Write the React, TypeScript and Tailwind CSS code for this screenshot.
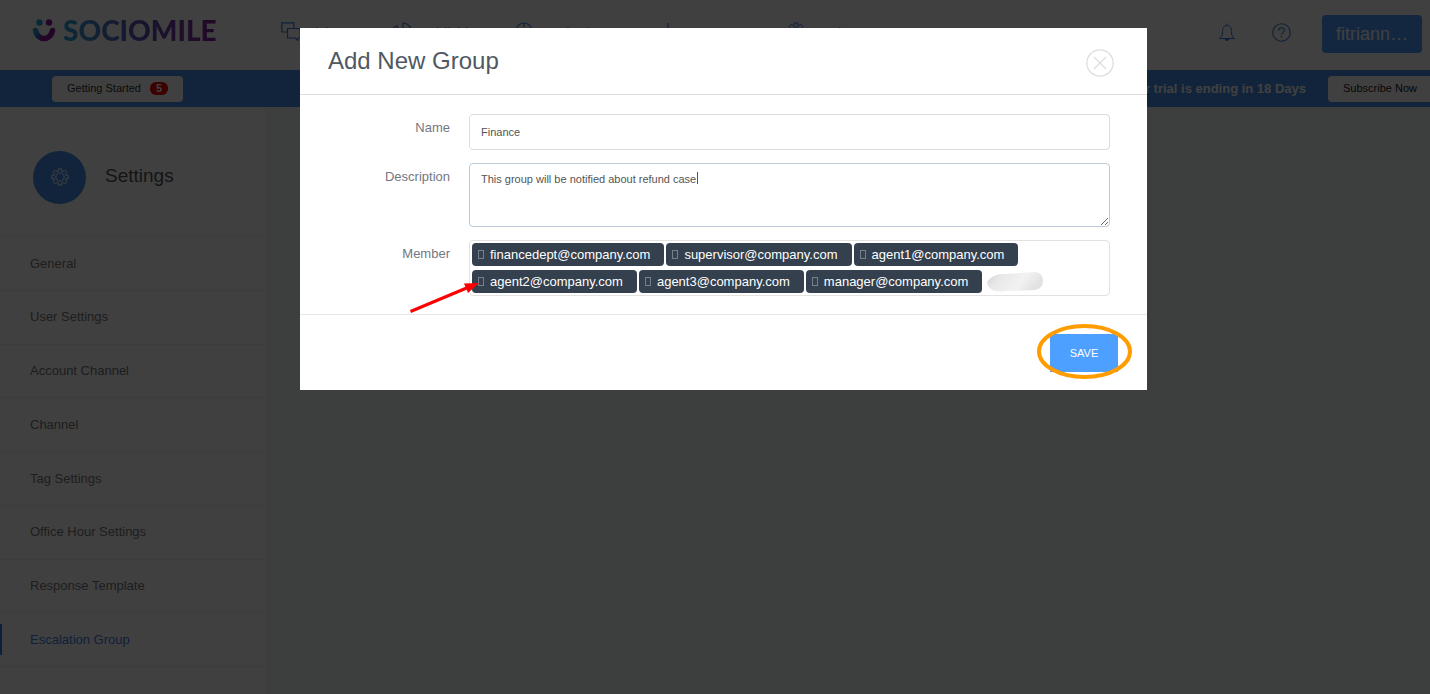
import { useState } from 'react';

const sidebarItems = [
  'General',
  'User Settings',
  'Account Channel',
  'Channel',
  'Tag Settings',
  'Office Hour Settings',
  'Response Template',
  'Escalation Group',
];

const members = [
  'financedept@company.com',
  'supervisor@company.com',
  'agent1@company.com',
  'agent2@company.com',
  'agent3@company.com',
  'manager@company.com',
];

function Logo() {
  return (
    <a href="#" className="flex items-center gap-[7px]">
      <svg width="24" height="24" viewBox="0 0 24 24" aria-hidden="true">
        <defs>
          <linearGradient id="smile" x1="0" y1="0" x2="1" y2="0.4">
            <stop offset="0" stopColor="#1fa5dc" />
            <stop offset="0.5" stopColor="#3a4fb0" />
            <stop offset="0.6" stopColor="#8a1a9c" />
            <stop offset="1" stopColor="#8a1a9c" />
          </linearGradient>
        </defs>
        <circle cx="7.5" cy="4.5" r="3.2" fill="#1fa5dc" />
        <circle cx="17" cy="4.5" r="3.2" fill="#8a1a9c" />
        <path d="M3.500 12.500C4 17 8 20.500 12 20.500S20 17 20.500 12.500" fill="none" stroke="url(#smile)" strokeWidth="5.600" strokeLinecap="round" />
      </svg>
      <span className="bg-linear-to-r from-[#1fa5dc] via-[#5a4fb8] to-[#8a1a9c] bg-clip-text font-[Lato,sans-serif] text-[28px] leading-8 font-black text-transparent">
        SOCIOMILE
      </span>
    </a>
  );
}

function GearIcon({ size }: { size: number }) {
  return (
    <svg width={size} height={size} viewBox="0 0 20 20" fill="none" stroke="currentColor" strokeWidth="1.1" strokeLinejoin="round" aria-hidden="true">
      <path d="M8.300 3.300 8 1h4l-.3 2.300 1.800.8 1.500-1.900 2.800 2.800-1.900 1.500.8 1.800L19 8v4l-2.300-.3-.8 1.800 1.900 1.500-2.800 2.800-1.500-1.900-1.800.8L12 19H8l.3-2.300-1.800-.8L5 17.800 2.200 15l1.900-1.500-.8-1.800L1 12V8l2.300.3.8-1.800L2.200 5 5 2.200l1.500 1.900z" />
      <circle cx="10" cy="10" r="4.600" />
    </svg>
  );
}

function Header() {
  return (
    <header className="flex h-[70px] items-start bg-white px-2">
      <div className="w-[273px] pt-[14px] pl-6">
        <Logo />
      </div>
      <nav className="flex pt-[22px] text-sm leading-[22px] text-[#3f7fe0]">
        <a href="#" className="flex w-28 gap-[6px]">
          <svg width="20" height="19" viewBox="0 0 20 19" fill="none" stroke="currentColor" strokeWidth="1.200" aria-hidden="true">
            <path d="M6 10H.8V.8h12V6M6.500 6.500h12.700v9.500h-2.400v2.400L14 16H6.500z" />
          </svg>
          Ticket
        </a>
        <a href="#" className="flex w-[122px] gap-2">
          <svg width="18" height="19" viewBox="0 0 18 19" fill="none" stroke="currentColor" strokeWidth="1.200" aria-hidden="true">
            <path d="M10 1v8h8A8 8 0 0 0 10 1zM4 4a8 8 0 1 0 10 8H6z" />
          </svg>
          Publishing
        </a>
        <a href="#" className="flex w-[143px] gap-[6px]">
          <svg width="18" height="18" viewBox="0 0 18 18" fill="none" stroke="currentColor" strokeWidth="1.200" aria-hidden="true">
            <circle cx="9" cy="9" r="8" />
            <path d="M9 1v4M9 9l3-3" />
          </svg>
          Monitoring
        </a>
        <a href="#" className="flex w-[129px] gap-3">
          <svg width="18" height="18" viewBox="0 0 18 18" fill="none" stroke="currentColor" strokeWidth="1.200" aria-hidden="true">
            <path d="M1 17V9M6 17V6M10 17V1M15 17v-6" />
          </svg>
          Report
        </a>
        <a href="#" className="flex gap-2">
          <GearIcon size={18} />
          Setting
        </a>
      </nav>
      <div className="ml-auto flex items-start pt-[15px] text-[#3f7fe0]">
        <button type="button" aria-label="Notifications" className="mt-2 mr-9">
          <svg width="18" height="19" viewBox="0 0 18 19" fill="none" stroke="currentColor" aria-hidden="true">
            <path d="M1 15.500h16M2 15.200c2-1.400 2.500-3 2.500-6.700C4.500 5 6 2.500 9 2.500s4.500 2.500 4.500 6c0 3.700.5 5.300 2.500 6.700M9 .5v2" />
            <path d="M7 16h4c-.5 2-3.500 2-4 0z" fill="currentColor" />
          </svg>
        </button>
        <button type="button" aria-label="Help" className="mt-2 mr-[31px]">
          <svg width="19" height="19" viewBox="0 0 19 19" fill="none" stroke="currentColor" strokeWidth="1.100" aria-hidden="true">
            <circle cx="9.500" cy="9.500" r="8.800" />
            <path d="M6.800 7.500c0-3.700 5.600-3.500 5.600-.2 0 1.900-2.900 2.200-2.900 4.400M9.500 13v1.500" />
          </svg>
        </button>
        <button type="button" className="h-[38px] rounded bg-[#4da0ff] px-[14px] text-lg text-white">
          fitriann…
        </button>
      </div>
    </header>
  );
}

function TrialBanner() {
  return (
    <div className="flex h-[37px] items-center overflow-hidden bg-[#4490ec] pl-[52px]">
      <button type="button" className="flex h-[26px] items-center gap-[9px] rounded bg-white px-[15px] text-[11px] text-[#333]">
        Getting Started
        <span className="rounded-md bg-[#f00000] px-[6px] text-[11px] leading-[13px] font-bold text-white">5</span>
      </button>
      <p className="ml-auto pr-[22px] text-[13px] font-bold text-white">Your trial is ending in 18 Days</p>
      <button type="button" className="-mr-2 h-[26px] rounded bg-white pr-[21px] pl-[15px] text-[11px] text-[#222]">
        Subscribe Now
      </button>
    </div>
  );
}

function Sidebar() {
  return (
    <aside className="w-[266px] bg-white">
      <div className="flex h-[128px] items-center gap-[19px] pt-[10px] pl-[33px]">
        <span className="flex size-[53px] items-center justify-center rounded-full bg-[#4490f0] text-white">
          <GearIcon size={18} />
        </span>
        <h2 className="pb-0.5 text-[19px] text-[#555]">Settings</h2>
      </div>
      <ul className="grid h-[430px] auto-rows-fr text-[13px] text-[#777]">
        {sidebarItems.map((item) => {
          const active = item === 'Escalation Group';
          return (
            <li key={item} className="flex items-center border-t border-[#f0f0f0]">
              <a
                href="#"
                className={active ? 'border-l-2 border-[#2f7fe8] py-[6px] pl-7 text-[#3f80e8]' : 'py-[6px] pl-[30px]'}
              >
                {item}
              </a>
            </li>
          );
        })}
      </ul>
      <hr className="border-[#f0f0f0]" />
    </aside>
  );
}

function MemberTag({ email }: { email: string }) {
  return (
    <span className="flex h-[23px] items-center gap-[6px] rounded-sm bg-[#34404e] pr-[14px] pl-[6px] text-white">
      <button type="button" aria-label={`Remove ${email}`} className="h-[9px] w-[6px] border border-[#74808c]" />
      {email}
    </span>
  );
}

function AddGroupModal() {
  const [name, setName] = useState('Finance');
  const [description, setDescription] = useState('This group will be notified about refund case');

  return (
    <form role="dialog" aria-labelledby="modal-title" className="w-full max-w-[847px] bg-white">
      <div className="flex h-[67px] items-start justify-between border-b border-[#dcdcdc] pr-[33px] pl-7">
        <h1 id="modal-title" className="pt-[17px] text-2xl text-[#505863]">
          Add New Group
        </h1>
        <button type="button" aria-label="Close" className="mt-[21px] text-[#dedede]">
          <svg width="28" height="28" viewBox="0 0 28 28" fill="none" stroke="currentColor" strokeWidth="1.300" aria-hidden="true">
            <circle cx="14" cy="14" r="13.200" />
            <path d="M8 8l12 12M20 8 8 20" />
          </svg>
        </button>
      </div>

      <div className="grid grid-cols-[150px_1fr] gap-x-[19px] gap-y-[13px] border-b border-[#e6e6e6] pt-[19px] pr-[37px] pb-[18px] text-[13px] leading-5 text-[#73777f]">
        <label htmlFor="name" className="pt-1 text-right">Name</label>
        <input
          id="name"
          value={name}
          onChange={(e) => setName(e.target.value)}
          className="h-9 rounded border border-[#dcdcdc] px-[11px] text-[11px] text-[#555] outline-none"
        />

        <label htmlFor="description" className="pt-1 text-right">Description</label>
        <div className="relative flex">
          <textarea
            id="description"
            value={description}
            onChange={(e) => setDescription(e.target.value)}
            className="h-16 w-full rounded border border-[#bccad8] px-[11px] py-[7px] text-[11px] leading-4 text-[#555] outline-none"
          />
          <span className="absolute top-[9px] left-[228px] h-3 w-px bg-[#555]" />
        </div>

        <span className="pt-1 text-right">Member</span>
        <div className="flex min-h-[56px] flex-wrap content-start gap-x-[2px] gap-y-1 rounded border border-[#e2e2e2] py-[2px] pr-10 pl-[2px]">
          {members.map((email) => (
            <MemberTag key={email} email={email} />
          ))}
          <svg width="60" height="23" viewBox="0 0 60 23" aria-hidden="true">
            <defs>
              <linearGradient id="smudge" x1="0" y1="0" x2="1" y2="0.3">
                <stop offset="0" stopColor="#d2d2d2" />
                <stop offset="0.300" stopColor="#e8e8e8" />
                <stop offset="0.700" stopColor="#f2f2f2" />
                <stop offset="1" stopColor="#e2e2e2" />
              </linearGradient>
            </defs>
            <path d="M3 12C8 5 14 4 22 4L50 2c7 0 9 4 9 9s-3 8-8 9L22 21C10 23 4 19 3 12z" fill="url(#smudge)" />
          </svg>
        </div>
      </div>

      <div className="flex h-[75px] items-start justify-end pt-[19px] pr-[29px]">
        <div className="relative">
          <button type="submit" className="h-[38px] w-[68px] bg-[#4da0ff] text-[11px] text-white">
            SAVE
          </button>
          <svg className="pointer-events-none absolute -top-[10px] -left-[13px]" width="95" height="56" viewBox="0 0 95 56" fill="none" aria-hidden="true">
            <ellipse cx="47.500" cy="27.500" rx="45.500" ry="25.500" stroke="#ff9c00" strokeWidth="4" />
          </svg>
        </div>
      </div>

      <svg className="pointer-events-none absolute top-[280px] left-[409px]" width="72" height="34" viewBox="0 0 72 34" aria-hidden="true">
        <path d="M1.500 31.500 60 7" stroke="#f00" strokeWidth="3" />
        <path d="M70 3 55 3.500 59 13z" fill="#f00" />
      </svg>
    </form>
  );
}

export default function App() {
  return (
    <div className="relative flex min-h-screen flex-col overflow-hidden bg-[#f0fcf8] font-['Liberation_Sans',Arial,sans-serif]">
      <Header />
      <TrialBanner />
      <div className="flex flex-1 pt-px">
        <Sidebar />
      </div>
      <div className="absolute inset-0 flex items-start justify-center bg-black/75 pt-7 pl-[17px]">
        <AddGroupModal />
      </div>
    </div>
  );
}
